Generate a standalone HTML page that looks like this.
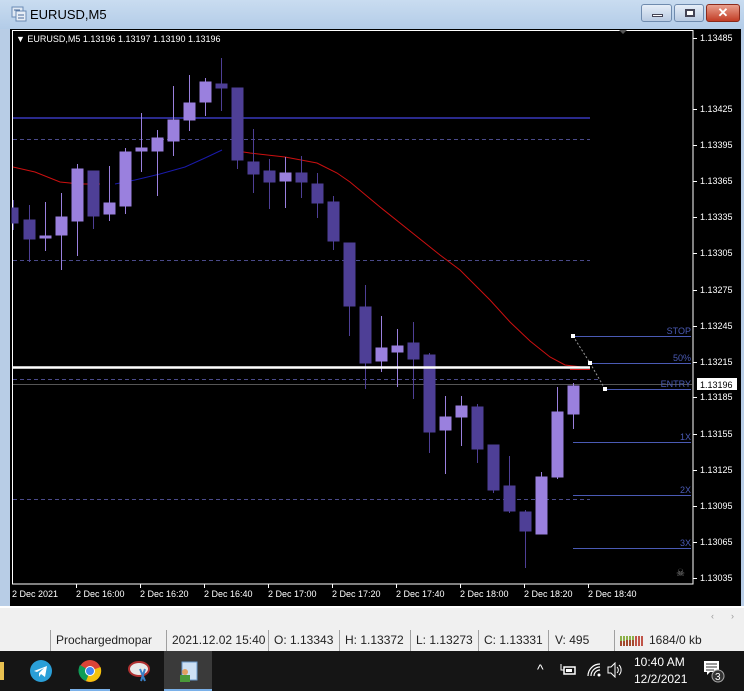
<!DOCTYPE html>
<html><head><meta charset="utf-8"><style>
*{margin:0;padding:0;box-sizing:border-box}
body{width:744px;height:691px;overflow:hidden;background:#f0f0f0;font-family:"Liberation Sans",sans-serif;position:relative}
.title{position:absolute;left:0;top:0;width:744px;height:29px;background:linear-gradient(#c9dcf0,#b3cce8);}
.title span{position:absolute;left:30px;top:7px;font-size:13px;color:#000}
.btn{position:absolute;top:4px;height:18px;border:1px solid #6f8bae;border-radius:3px;background:linear-gradient(#e6eef8,#b9cbe2)}
.status{position:absolute;top:629px;height:22px;font-size:12px;color:#222}
.sep{position:absolute;top:630px;width:1px;height:21px;background:#a0a0a0}
.task{position:absolute;left:0;top:651px;width:744px;height:40px;background:#151515}
</style></head><body>
<div class="title"><svg style="position:absolute;left:11px;top:6px" width="16" height="16"><rect x="1" y="1" width="11" height="10" fill="#dfe8f3" stroke="#6a8ab4"/><rect x="5" y="5" width="10" height="10" fill="#e8eef6" stroke="#6a8ab4"/><path d="M3 4h6M7 9h6M7 12h6" stroke="#4a6a9a"/></svg><span>EURUSD,M5</span>
<div class="btn" style="left:641px;width:31px"><div style="position:absolute;left:10px;top:9px;width:11px;height:3px;background:#fff;border:1px solid #445"></div></div>
<div class="btn" style="left:674px;width:30px"><div style="position:absolute;left:10px;top:4px;width:10px;height:8px;border:2px solid #445;background:#fff"></div></div>
<div class="btn" style="left:706px;width:34px;background:linear-gradient(#e9a08e,#c23d25);border-color:#8b2a1b"><div style="position:absolute;left:0;top:0;width:32px;text-align:center;color:#fff;font-weight:bold;font-size:13px;line-height:16px">✕</div></div>
</div>
<svg style="position:absolute;left:0;top:0" width="744" height="608" font-family="Liberation Sans, sans-serif">
<rect x="10" y="29" width="731" height="577" fill="#000"/>
<rect x="12.5" y="30.5" width="680.5" height="553.5" fill="none" stroke="#fff"/>
<text x="16" y="42" fill="#fff" font-size="9">▼ EURUSD,M5  1.13196 1.13197 1.13190 1.13196</text>
<path d="M619 30l4 4 4-4z" fill="#555"/>
<g stroke="#4a4a8a" stroke-dasharray="4,3">
<line x1="13" y1="139.5" x2="590" y2="139.5"/><line x1="13" y1="260.5" x2="590" y2="260.5"/><line x1="13" y1="379.5" x2="600" y2="379.5"/><line x1="13" y1="499.5" x2="590" y2="499.5"/>
</g>
<line x1="13" y1="118" x2="590" y2="118" stroke="#2a2a8c" stroke-width="2"/>
<line x1="13" y1="384.5" x2="692" y2="384.5" stroke="#555"/>
<polyline fill="none" stroke="#cc1010" points="13,167 35,172 60,182 80,184 100,184"/>
<polyline fill="none" stroke="#1a1aaa" points="115,184 135,180 160,174 185,167 205,158 222,150"/>
<polyline fill="none" stroke="#cc1010" points="237,151 250,153 285,157 317,163 337,173 350,182 380,207 415,235 440,255 460,270 490,300 510,322 530,341 550,357 565,365 590,368"/>
<g id="c">
<!-- candles -->
<g fill="#4e3f96" stroke="#4e3f96">
<line x1="13.5" y1="200" x2="13.5" y2="230"/><rect x="12" y="208" width="6" height="15"/>
<line x1="29.5" y1="205" x2="29.5" y2="262"/><rect x="24" y="220" width="11" height="19"/>
<line x1="93.5" y1="171" x2="93.5" y2="229"/><rect x="88" y="171" width="11" height="45"/>
<line x1="221.5" y1="58" x2="221.5" y2="111"/><rect x="216" y="84" width="11" height="4"/>
<line x1="237.5" y1="88" x2="237.5" y2="169"/><rect x="232" y="88" width="11" height="72"/>
<line x1="253.5" y1="129" x2="253.5" y2="193"/><rect x="248" y="162" width="11" height="12"/>
<line x1="269.5" y1="159" x2="269.5" y2="209"/><rect x="264" y="171" width="11" height="11"/>
<line x1="301.5" y1="156" x2="301.5" y2="198"/><rect x="296" y="173" width="11" height="9"/>
<line x1="317.5" y1="173" x2="317.5" y2="218"/><rect x="312" y="184" width="11" height="19"/>
<line x1="333.5" y1="196" x2="333.5" y2="250"/><rect x="328" y="202" width="11" height="39"/>
<line x1="349.5" y1="243" x2="349.5" y2="336"/><rect x="344" y="243" width="11" height="63"/>
<line x1="365.5" y1="285" x2="365.5" y2="389"/><rect x="360" y="307" width="11" height="56"/>
<line x1="413.5" y1="322" x2="413.5" y2="399"/><rect x="408" y="343" width="11" height="16"/>
<line x1="429.5" y1="353" x2="429.5" y2="453"/><rect x="424" y="355" width="11" height="77"/>
<line x1="477.5" y1="404" x2="477.5" y2="463"/><rect x="472" y="407" width="11" height="42"/>
<line x1="493.5" y1="445" x2="493.5" y2="493"/><rect x="488" y="445" width="11" height="45"/>
<line x1="509.5" y1="456" x2="509.5" y2="513"/><rect x="504" y="486" width="11" height="25"/>
<line x1="525.5" y1="510" x2="525.5" y2="568"/><rect x="520" y="512" width="11" height="19"/>
</g>
<g fill="#9a80de" stroke="#9a80de">
<line x1="45.5" y1="202" x2="45.5" y2="251"/><rect x="40" y="236" width="11" height="2"/>
<line x1="61.5" y1="193" x2="61.5" y2="270"/><rect x="56" y="217" width="11" height="18"/>
<line x1="77.5" y1="164" x2="77.5" y2="256"/><rect x="72" y="169" width="11" height="52"/>
<line x1="109.5" y1="166" x2="109.5" y2="221"/><rect x="104" y="203" width="11" height="11"/>
<line x1="125.5" y1="148" x2="125.5" y2="214"/><rect x="120" y="152" width="11" height="54"/>
<line x1="141.5" y1="113" x2="141.5" y2="172"/><rect x="136" y="148" width="11" height="3"/>
<line x1="157.5" y1="130" x2="157.5" y2="196"/><rect x="152" y="138" width="11" height="13"/>
<line x1="173.5" y1="86" x2="173.5" y2="156"/><rect x="168" y="120" width="11" height="21"/>
<line x1="189.5" y1="75" x2="189.5" y2="131"/><rect x="184" y="103" width="11" height="17"/>
<line x1="205.5" y1="78" x2="205.5" y2="116"/><rect x="200" y="82" width="11" height="20"/>
<line x1="285.5" y1="157" x2="285.5" y2="208"/><rect x="280" y="173" width="11" height="8"/>
<line x1="381.5" y1="316" x2="381.5" y2="372"/><rect x="376" y="348" width="11" height="13"/>
<line x1="397.5" y1="329" x2="397.5" y2="387"/><rect x="392" y="346" width="11" height="6"/>
<line x1="445.5" y1="396" x2="445.5" y2="474"/><rect x="440" y="417" width="11" height="13"/>
<line x1="461.5" y1="396" x2="461.5" y2="446"/><rect x="456" y="406" width="11" height="11"/>
<line x1="541.5" y1="472" x2="541.5" y2="534"/><rect x="536" y="477" width="11" height="57"/>
<line x1="557.5" y1="387" x2="557.5" y2="479"/><rect x="552" y="412" width="11" height="65"/>
<line x1="573.5" y1="383" x2="573.5" y2="429"/><rect x="568" y="386" width="11" height="28"/>
</g>
</g>
<line x1="13" y1="367.5" x2="590" y2="367.5" stroke="#fff" stroke-width="2.5"/>
<line x1="570" y1="369.5" x2="590" y2="369.5" stroke="#cc1010"/>
<g stroke="#4a5ab4">
<line x1="573" y1="336.5" x2="691" y2="336.5"/><line x1="589" y1="363.5" x2="691" y2="363.5"/><line x1="605" y1="389.5" x2="691" y2="389.5"/>
<line x1="573" y1="442.5" x2="691" y2="442.5"/><line x1="573" y1="495.5" x2="691" y2="495.5"/><line x1="573" y1="548.5" x2="691" y2="548.5"/>
</g>
<polyline points="573,336 590,363 605,389" fill="none" stroke="#999" stroke-dasharray="2,2"/>
<g fill="#fff"><rect x="571" y="334" width="4" height="4"/><rect x="588" y="361" width="4" height="4"/><rect x="603" y="387" width="4" height="4"/></g>
<g fill="#4a5ab4" font-size="9" text-anchor="end">
<text x="691" y="334">STOP</text><text x="691" y="361">50%</text><text x="691" y="387">ENTRY</text><text x="691" y="440">1X</text><text x="691" y="493">2X</text><text x="691" y="546">3X</text>
</g>
<text x="676" y="576" fill="#888" font-size="10">☠</text>
<g stroke="#fff"><line x1="693" y1="38.5" x2="697" y2="38.5"/><line x1="693" y1="109.5" x2="697" y2="109.5"/><line x1="693" y1="145.5" x2="697" y2="145.5"/><line x1="693" y1="181.5" x2="697" y2="181.5"/><line x1="693" y1="217.5" x2="697" y2="217.5"/><line x1="693" y1="253.5" x2="697" y2="253.5"/><line x1="693" y1="290.5" x2="697" y2="290.5"/><line x1="693" y1="326.5" x2="697" y2="326.5"/><line x1="693" y1="362.5" x2="697" y2="362.5"/><line x1="693" y1="397.5" x2="697" y2="397.5"/><line x1="693" y1="434.5" x2="697" y2="434.5"/><line x1="693" y1="470.5" x2="697" y2="470.5"/><line x1="693" y1="506.5" x2="697" y2="506.5"/><line x1="693" y1="542.5" x2="697" y2="542.5"/><line x1="693" y1="578.5" x2="697" y2="578.5"/></g>
<g fill="#fff" font-size="9">
<text x="700" y="41">1.13485</text><text x="700" y="112">1.13425</text><text x="700" y="148">1.13395</text><text x="700" y="184">1.13365</text><text x="700" y="220">1.13335</text><text x="700" y="256">1.13305</text><text x="700" y="293">1.13275</text><text x="700" y="329">1.13245</text><text x="700" y="365">1.13215</text><text x="700" y="400">1.13185</text><text x="700" y="437">1.13155</text><text x="700" y="473">1.13125</text><text x="700" y="509">1.13095</text><text x="700" y="545">1.13065</text><text x="700" y="581">1.13035</text>
</g>
<rect x="697" y="378" width="40" height="12" fill="#fff"/>
<text x="700" y="388" fill="#000" font-size="9">1.13196</text>
<g stroke="#fff"><line x1="76.5" y1="584" x2="76.5" y2="588"/><line x1="140.5" y1="584" x2="140.5" y2="588"/><line x1="204.5" y1="584" x2="204.5" y2="588"/><line x1="268.5" y1="584" x2="268.5" y2="588"/><line x1="332.5" y1="584" x2="332.5" y2="588"/><line x1="396.5" y1="584" x2="396.5" y2="588"/><line x1="460.5" y1="584" x2="460.5" y2="588"/><line x1="524.5" y1="584" x2="524.5" y2="588"/><line x1="588.5" y1="584" x2="588.5" y2="588"/></g>
<g fill="#fff" font-size="9">
<text x="12" y="597">2 Dec 2021</text><text x="76" y="597">2 Dec 16:00</text><text x="140" y="597">2 Dec 16:20</text><text x="204" y="597">2 Dec 16:40</text><text x="268" y="597">2 Dec 17:00</text><text x="332" y="597">2 Dec 17:20</text><text x="396" y="597">2 Dec 17:40</text><text x="460" y="597">2 Dec 18:00</text><text x="524" y="597">2 Dec 18:20</text><text x="588" y="597">2 Dec 18:40</text>
</g>
<rect x="0" y="29" width="10" height="577" fill="#b8cde6"/>
<rect x="741" y="29" width="3" height="577" fill="#b8cde6"/>
</svg>
<div style="position:absolute;left:0;top:606px;width:744px;height:2px;background:#fff"></div>
<div style="position:absolute;left:711px;top:611px;font-size:9px;color:#999">‹</div>
<div style="position:absolute;left:731px;top:611px;font-size:9px;color:#999">›</div>
<div class="sep" style="left:50px"></div><div class="sep" style="left:166px"></div><div class="sep" style="left:268px"></div><div class="sep" style="left:339px"></div><div class="sep" style="left:410px"></div><div class="sep" style="left:478px"></div><div class="sep" style="left:548px"></div><div class="sep" style="left:614px"></div>
<div class="status" style="left:56px;top:633px">Prochargedmopar</div>
<div class="status" style="left:172px;top:633px">2021.12.02 15:40</div>
<div class="status" style="left:274px;top:633px">O: 1.13343</div>
<div class="status" style="left:345px;top:633px">H: 1.13372</div>
<div class="status" style="left:416px;top:633px">L: 1.13273</div>
<div class="status" style="left:484px;top:633px">C: 1.13331</div>
<div class="status" style="left:555px;top:633px">V: 495</div>
<svg style="position:absolute;left:620px;top:634px" width="24" height="12"><g stroke-width="1.5"><path d="M1 12V2M4 12V2M7 12V2M10 12V2M13 12V2" stroke="#6a9a10"/><path d="M16 12V2M19 12V2M22 12V2" stroke="#b02010"/><path d="M1 12V7M4 12V7M7 12V6M10 12V6M13 12V6" stroke="#a02010"/></g></svg>
<div class="status" style="left:649px;top:633px">1684/0 kb</div>
<div class="task">
<div style="position:absolute;left:0;top:11px;width:4px;height:18px;background:#e8c050"></div>
<div style="position:absolute;left:164px;top:0;width:48px;height:40px;background:#3a3a3a"></div>
<div style="position:absolute;left:70px;top:38px;width:40px;height:2px;background:#7ab0e8"></div>
<div style="position:absolute;left:164px;top:38px;width:48px;height:2px;background:#7ab0e8"></div>
<svg style="position:absolute;left:29px;top:8px" width="24" height="24"><circle cx="12" cy="12" r="11" fill="#2a9fd8"/><path d="M5 12l13-5-2 11-4-3-2 3v-4l5-5-7 4z" fill="#fff"/></svg>
<svg style="position:absolute;left:78px;top:8px" width="24" height="24"><circle cx="12" cy="12" r="11" fill="#db4437"/><path d="M12 12L22.5 8A11 11 0 0 1 8 22z" fill="#f4c20d"/><path d="M12 12L8 22A11 11 0 0 1 2 6z" fill="#0f9d58"/><circle cx="12" cy="12" r="5" fill="#fff"/><circle cx="12" cy="12" r="4" fill="#4285f4"/></svg>
<svg style="position:absolute;left:127px;top:8px" width="26" height="24"><ellipse cx="12" cy="10" rx="10" ry="7" fill="#e8e8e8" stroke="#b03030" stroke-width="2"/><path d="M13 10l5 12M18 10l-4 12" stroke="#3a80c8" stroke-width="2"/></svg>
<svg style="position:absolute;left:176px;top:9px" width="24" height="24"><rect x="6" y="2" width="15" height="18" fill="#cde0f4" stroke="#6a9acc"/><circle cx="9" cy="12" r="3" fill="#e0a060"/><rect x="4" y="15" width="10" height="7" fill="#4a9a3a"/></svg>
<div style="position:absolute;left:537px;top:10px;color:#fff;font-size:14px">^</div>
<svg style="position:absolute;left:560px;top:12px" width="16" height="14"><rect x="4" y="4" width="11" height="7" fill="none" stroke="#fff" stroke-width="1.5"/><rect x="6" y="6" width="6" height="3" fill="#fff"/><path d="M1 1v6h3" stroke="#fff" fill="none"/></svg>
<svg style="position:absolute;left:586px;top:11px" width="16" height="16"><path d="M2 14A12 12 0 0 1 14 2M5 14A9 9 0 0 1 14 5M8 14A6 6 0 0 1 14 8" stroke="#fff" fill="none" stroke-width="1.2"/><circle cx="13" cy="13" r="1.5" fill="#fff"/></svg>
<svg style="position:absolute;left:606px;top:11px" width="18" height="16"><path d="M2 5h3l4-4v14l-4-4H2z" stroke="#fff" fill="none"/><path d="M11 5a4 4 0 0 1 0 6M13 3a7 7 0 0 1 0 10" stroke="#fff" fill="none"/></svg>
<div style="position:absolute;left:634px;top:4px;color:#fff;font-size:12px">10:40 AM</div>
<div style="position:absolute;left:634px;top:21px;color:#fff;font-size:12px">12/2/2021</div>
<svg style="position:absolute;left:702px;top:8px" width="26" height="26"><path d="M2 2h15v11h-9l-3 3v-3H2z" fill="#fff"/><path d="M4 5h11M4 8h11M4 11h8" stroke="#333"/><circle cx="16" cy="17" r="6" fill="#333" stroke="#aaa"/><text x="13" y="21" fill="#fff" font-size="10" font-family="Liberation Sans">3</text></svg>
</div>
</body></html>
